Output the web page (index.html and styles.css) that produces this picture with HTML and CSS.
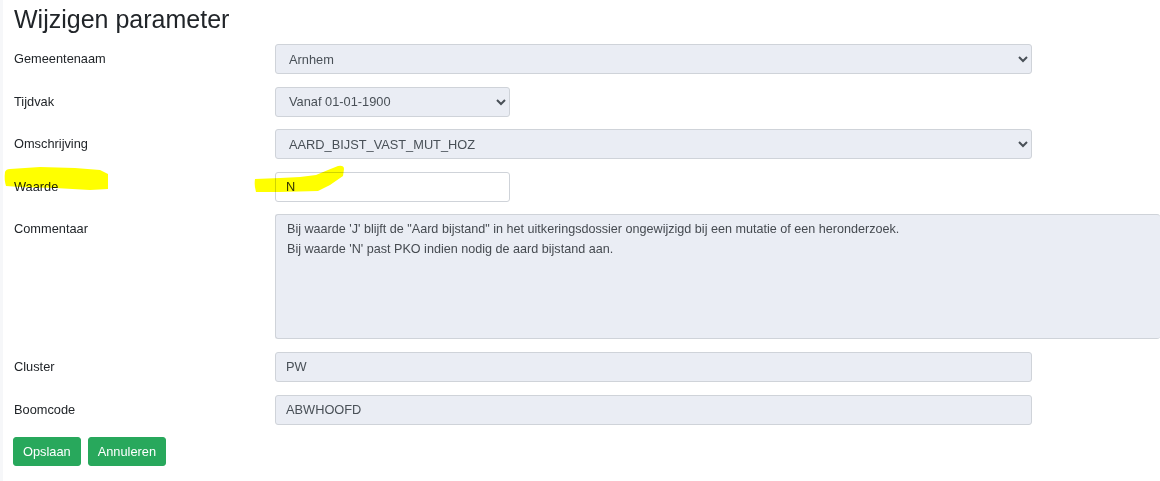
FILE: index.html
```html
<!DOCTYPE html>
<html lang="nl">
<head>
<meta charset="utf-8">
<title>Wijzigen parameter</title>
<link rel="stylesheet" href="styles.css">
</head>
<body>
<div class="page">
  <h1 class="title">Wijzigen parameter</h1>
  <form class="form">
    <div class="row">
      <label class="label">Gemeentenaam</label>
      <select class="control wide"><option>Arnhem</option></select>
    </div>
    <div class="row">
      <label class="label">Tijdvak</label>
      <select class="control narrow"><option>Vanaf 01-01-1900</option></select>
    </div>
    <div class="row">
      <label class="label">Omschrijving</label>
      <select class="control wide"><option>AARD_BIJST_VAST_MUT_HOZ</option></select>
    </div>
    <div class="row">
      <label class="label">Waarde</label>
      <input class="control narrow white" type="text" value="N">
    </div>
    <div class="row">
      <label class="label">Commentaar</label>
      <textarea class="control area" readonly>Bij waarde 'J' blijft de "Aard bijstand" in het uitkeringsdossier ongewijzigd bij een mutatie of een heronderzoek.
Bij waarde 'N' past PKO indien nodig de aard bijstand aan.</textarea>
    </div>
    <div class="row">
      <label class="label">Cluster</label>
      <input class="control wide" type="text" value="PW" readonly>
    </div>
    <div class="row">
      <label class="label">Boomcode</label>
      <input class="control wide" type="text" value="ABWHOOFD" readonly>
    </div>
    <div class="buttons">
      <button type="button" class="btn">Opslaan</button>
      <button type="button" class="btn">Annuleren</button>
    </div>
  </form>
  <svg class="marker" width="1160" height="481" viewBox="0 0 1160 481" aria-hidden="true">
    <path d="M5 172 Q6 169 10 169 L40 167 L75 168 L100 170 L108 174 L108 189 L90 190 L55 188 L20 187 L6 186 Q4 180 5 172 Z" fill="#ffff00"/>
    <path d="M255 179 L280 178 L300 177 L316 175 L328 170 L338 166 Q344 165 344 169 L343 176 L330 185 L318 191 L280 192 L256 192 Q254 186 255 179 Z" fill="#ffff00"/>
  </svg>
</div>
</body>
</html>
```

FILE: styles.css
```css
html, body {
  margin: 0;
  padding: 0;
  background: #ffffff;
}
body {
  width: 1160px;
  height: 481px;
  overflow: hidden;
  font-family: "Liberation Sans", Arial, sans-serif;
  color: #212529;
}
.page {
  position: relative;
  height: 481px;
  box-sizing: border-box;
  padding: 5px 0 0 11px;
  border-left: 3px solid #f6f7f9;
}
.title {
  margin: 0 0 10px 0;
  font-size: 25px;
  font-weight: 400;
  line-height: 29px;
  color: #212529;
}
.form {
  display: flex;
  flex-direction: column;
  gap: 12.6px;
}
.row {
  display: flex;
  align-items: flex-start;
}
.label {
  width: 261px;
  flex: none;
  padding-top: 5px;
  font-size: 12.8px;
  line-height: 19.2px;
}
.control {
  box-sizing: border-box;
  height: 30px;
  border: 1px solid #cfd3d9;
  border-radius: 3px;
  background-color: #eaedf4;
  color: #495057;
  font-family: "Liberation Sans", Arial, sans-serif;
  font-size: 12.8px;
  padding: 0 10px;
  margin: 0;
  outline: none;
}
select.control {
  padding-left: 9px;
}
.wide { width: 757px; }
.narrow { width: 235px; }
.white { background-color: #ffffff; color: #333; }
.area {
  width: 900px;
  height: 125px;
  padding: 5px 11px 4px;
  line-height: 19.2px;
  font-size: 12.6px;
  resize: none;
  color: #454a50;
  border-right: none;
}
.buttons {
  display: flex;
  gap: 7px;
  margin-left: -1px;
}
.btn {
  box-sizing: border-box;
  height: 29px;
  padding: 0 9px;
  border: 1px solid #28a85c;
  border-radius: 3px;
  background: #28a85c;
  color: #ffffff;
  font-family: "Liberation Sans", Arial, sans-serif;
  font-size: 12.8px;
}
.marker {
  position: absolute;
  left: -3px;
  top: 0;
  pointer-events: none;
  mix-blend-mode: multiply;
}
```
